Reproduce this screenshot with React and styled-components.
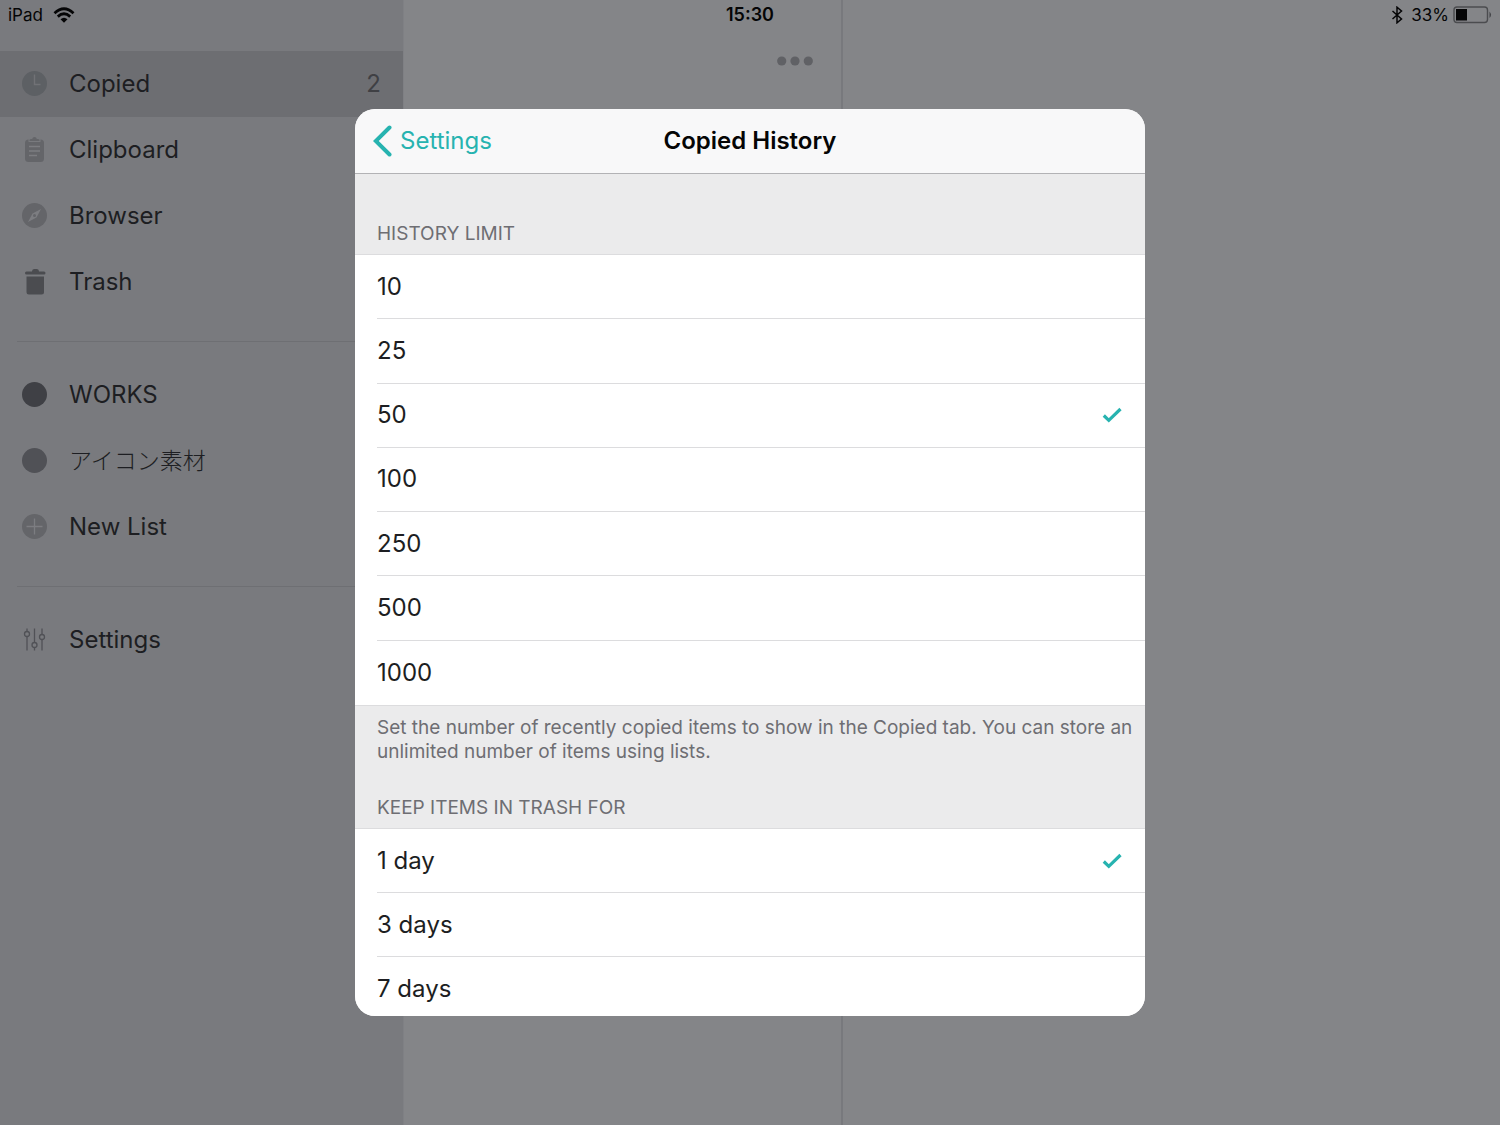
import React, { useState } from 'react'
import styled, { createGlobalStyle } from 'styled-components'

const GlobalStyle = createGlobalStyle`
  * {
    box-sizing: border-box;
  }
  body {
    margin: 0;
    background: #848588;
    color: #1d1e22;
    font-family: Inter, "Noto Sans CJK JP", sans-serif;
    font-size: 24px;
    line-height: 32px;
  }
`

const Screen = styled.div`
  display: flex;
  height: 100vh;
  overflow: hidden;
`

const StatusBar = styled.header`
  position: absolute;
  top: 0;
  left: 0;
  right: 0;
  display: grid;
  grid-template-columns: 1fr auto 1fr;
  align-items: center;
  height: 30px;
  padding: 0 8px;
  color: #050506;
  font-size: 17px;
  line-height: 20px;
`

const StatusGroup = styled.div`
  display: flex;
  align-items: center;
  justify-content: ${(props) => (props.$end ? 'flex-end' : 'flex-start')};
  gap: ${(props) => (props.$end ? '4px' : '10px')};
`

const Bluetooth = styled.svg`
  margin-right: 4px;
`

const Clock = styled.time`
  font-size: 18px;
  font-weight: 600;
`

const Sidebar = styled.nav`
  flex: 0 0 404px;
  padding-top: 51px;
  background: #797a7e;
  border-right: 1px solid #7f8084;
`

const NavGroup = styled.ul`
  list-style: none;
  margin: 0;
  padding: 0;
`

const Divider = styled.hr`
  height: 1px;
  margin: 26px 0 20px 17px;
  border: 0;
  background: #6e6f73;
`

const NavLink = styled.a`
  display: flex;
  align-items: center;
  gap: 21px;
  height: 66px;
  padding: 0 22px;
  color: inherit;
  text-decoration: none;
  background: ${(props) => (props.$active ? '#6d6e72' : 'transparent')};

  svg {
    flex: none;
  }

  :lang(ja) {
    font-size: 23px;
    font-weight: 300;
  }
`

const Count = styled.span`
  margin-left: auto;
  color: #3f4044;
`

const ClipList = styled.main`
  flex: 0 0 439px;
  padding: 50px 28px 0;
  border-right: 2px solid #78797d;
`

const MoreButton = styled.button`
  display: block;
  margin-left: auto;
  padding: 0;
  border: 0;
  background: none;
  line-height: 0;
`

const Backdrop = styled.div`
  position: absolute;
  inset: 0;
  display: grid;
  place-items: center;
`

const Dialog = styled.section`
  display: flex;
  flex-direction: column;
  width: min(790px, 100%);
  height: min(907px, 100%);
  border-radius: 20px;
  overflow: hidden;
  background: #ebebec;
`

const DialogHeader = styled.div`
  flex: none;
  display: grid;
  grid-template-columns: 1fr auto 1fr;
  align-items: center;
  height: 65px;
  padding: 0 18px;
  background: #f8f8f9;
  border-bottom: 1px solid #b2b2b5;
`

const BackButton = styled.button`
  display: flex;
  align-items: center;
  gap: 8px;
  padding: 0;
  border: 0;
  background: none;
  color: #27b3b0;
  font: inherit;
`

const Title = styled.h1`
  margin: 0;
  color: #050505;
  font-size: 24px;
  font-weight: 600;
`

const DialogBody = styled.div`
  flex: 1;
  overflow-y: auto;
  scrollbar-width: none;
`

const Section = styled.fieldset`
  min-width: 0;
  margin: 0;
  padding: 0;
  border: 0;
`

const SectionTitle = styled.legend`
  width: 100%;
  padding: ${(props) => props.$top}px 22px 8px;
  color: #6e6e73;
  font-size: 19px;
  line-height: 24px;
`

const Options = styled.div`
  display: grid;
  grid-auto-rows: 1fr;
  height: ${(props) => props.$height}px;
  padding-left: 22px;
  background: #fff;
  border-top: 1px solid #dcdcde;
  border-bottom: 1px solid #dcdcde;
`

const Option = styled.label`
  display: flex;
  align-items: center;
  justify-content: space-between;
  padding-right: 23px;

  &:not(:last-child) {
    border-bottom: 1px solid #dcdcde;
  }
`

const Radio = styled.input`
  appearance: none;
  width: 0;
  height: 0;
  margin: 0;
`

const OptionText = styled.span`
  flex: 1;
`

const Note = styled.p`
  margin: 0;
  padding: 10px 8px 0 22px;
  color: #6e6e73;
  font-size: 19px;
  line-height: 24px;
`

const iconTypes = {
  clock: (
    <>
      <circle cx="13" cy="13" r="12.5" fill="#5d6064" />
      <path d="M13 4v10h6" fill="none" stroke="#717276" strokeWidth="1.4" />
    </>
  ),
  clipboard: (
    <>
      <rect x="3.5" y="3" width="19" height="22.5" rx="3.5" fill="#646569" />
      <path d="M7 2v3.500h12V2Z" fill="#797a7e" />
      <path
        d="M8 4.500q-.5-2 1.500-2h1.200q.3-2 2.300-2t2.300 2h1.200q2 0 1.500 2Z"
        fill="#646569"
      />
      <path d="M7.500 10h11M7.500 14.500h11M7.500 19h8" stroke="#7c7d81" strokeWidth="1.4" />
    </>
  ),
  compass: (
    <>
      <circle cx="13" cy="13" r="12.5" fill="#646569" />
      <path
        fillRule="evenodd"
        d="M19.500 6.500 15 15 6.500 19.500 11 11ZM13 11.500a1.500 1.500 0 1 0 0 3 1.500 1.500 0 1 0 0-3Z"
        fill="#7c7d81"
      />
    </>
  ),
  trash: (
    <g fill="#4b4c50">
      <path d="M5 6Q3.500 6 3.500 4.500T5 3h5.500Q10.500.5 12.500.5h3q2 0 2 2.500H22.500q1.500 0 1.500 1.500T22.500 6Z" />
      <path d="M5 8h17.500v15.500q0 2.500-2.500 2.500H7.500Q5 26 5 23.500Z" />
    </g>
  ),
  dotDark: <circle cx="13" cy="13" r="12.5" fill="#3f4045" />,
  dot: <circle cx="13" cy="13" r="12.5" fill="#505156" />,
  plus: (
    <>
      <circle cx="13" cy="13" r="12.5" fill="#646569" />
      <path d="M13 5v16M5 13h16" stroke="#7c7d81" strokeWidth="1.3" />
    </>
  ),
  sliders: (
    <g fill="none" stroke="#505156" strokeWidth="1.3">
      <path d="M5.500 2v3M5.500 10v14M13 2v14M13 21v3M20.500 2v6M20.500 13v11" />
      <circle cx="5.5" cy="7.5" r="2.5" />
      <circle cx="13" cy="18.5" r="2.5" />
      <circle cx="20.5" cy="10.5" r="2.5" />
    </g>
  ),
}

const navGroups = [
  [
    { icon: 'clock', label: 'Copied', count: 2 },
    { icon: 'clipboard', label: 'Clipboard' },
    { icon: 'compass', label: 'Browser' },
    { icon: 'trash', label: 'Trash' },
  ],
  [
    { icon: 'dotDark', label: 'WORKS' },
    { icon: 'dot', label: 'アイコン素材', lang: 'ja' },
    { icon: 'plus', label: 'New List' },
  ],
  [{ icon: 'sliders', label: 'Settings' }],
]

const limits = ['10', '25', '50', '100', '250', '500', '1000']
const trashDays = ['1 day', '3 days', '7 days']

function NavIcon({ type }) {
  return (
    <svg width="26" height="26" viewBox="0.5 0.5 26 26" overflow="visible" aria-hidden="true">
      {iconTypes[type]}
    </svg>
  )
}

function OptionList({ name, items, value, onChange, height }) {
  return (
    <Options $height={height}>
      {items.map((item) => (
        <Option key={item}>
          <Radio
            type="radio"
            name={name}
            checked={item === value}
            onChange={() => onChange(item)}
          />
          <OptionText>{item}</OptionText>
          {item === value && (
            <svg width="20" height="16" viewBox="0 0 20 16" aria-hidden="true">
              <path d="M1.800 8.500 6.800 13.300 18.500 2" fill="none" stroke="#27b3b0" strokeWidth="3.200" />
            </svg>
          )}
        </Option>
      ))}
    </Options>
  )
}

export default function App() {
  const [limit, setLimit] = useState('50')
  const [days, setDays] = useState('1 day')

  return (
    <>
      <GlobalStyle />
      <Screen>
        <Sidebar>
          {navGroups.map((group, i) => (
            <React.Fragment key={i}>
              {i > 0 && <Divider />}
              <NavGroup>
                {group.map((item) => (
                  <li key={item.label}>
                    <NavLink href="#" $active={item.label === 'Copied'}>
                      <NavIcon type={item.icon} />
                      <span lang={item.lang}>{item.label}</span>
                      {item.count && <Count>{item.count}</Count>}
                    </NavLink>
                  </li>
                ))}
              </NavGroup>
            </React.Fragment>
          ))}
        </Sidebar>
        <ClipList>
          <MoreButton aria-label="More">
            <svg width="36" height="22" viewBox="0 0 36 22" fill="#606165">
              <circle cx="4.7" cy="11" r="4.600" />
              <circle cx="18" cy="11" r="4.600" />
              <circle cx="31.300" cy="11" r="4.600" />
            </svg>
          </MoreButton>
        </ClipList>
      </Screen>

      <StatusBar>
        <StatusGroup>
          <span>iPad</span>
          <svg width="22" height="16" viewBox="0 0 22 16" fill="none" stroke="#050506" aria-hidden="true">
            <path d="M1.500 6.200Q11-2.600 20.500 6.200" strokeWidth="2.800" />
            <path d="M4.800 9.600Q11 4 17.200 9.600" strokeWidth="2.800" />
            <path d="M7.500 12.300Q11 9.300 14.500 12.300L11 15.700Z" fill="#050506" stroke="none" />
          </svg>
        </StatusGroup>
        <Clock>15:30</Clock>
        <StatusGroup $end>
          <Bluetooth width="12" height="18" viewBox="0 0 12 18" aria-hidden="true">
            <path d="M1.500 5 10.500 13 6 16.800V1.200L10.500 5 1.500 13" fill="none" stroke="#050506" strokeWidth="1.5" />
          </Bluetooth>
          <span>33%</span>
          <svg width="39" height="18" viewBox="0 0 39 18" aria-hidden="true">
            <rect x="1" y="1" width="33.500" height="15.500" rx="3" fill="none" stroke="#4b4c4f" strokeWidth="1.4" />
            <rect x="3" y="3" width="11" height="11.500" fill="#050506" />
            <path d="M36.500 5.500q3 3.300 0 6.600Z" fill="#3f4044" />
          </svg>
        </StatusGroup>
      </StatusBar>

      <Backdrop>
        <Dialog role="dialog" aria-labelledby="dialog-title">
          <DialogHeader>
            <BackButton>
              <svg width="19" height="32" viewBox="0 0 19 32" aria-hidden="true">
                <path d="M16.500 2.500 2.800 16 16.500 29.500" fill="none" stroke="#27b3b0" strokeWidth="4" strokeLinecap="round" />
              </svg>
              Settings
            </BackButton>
            <Title id="dialog-title">Copied History</Title>
          </DialogHeader>
          <DialogBody>
            <Section>
              <SectionTitle $top={48}>HISTORY LIMIT</SectionTitle>
              <OptionList name="limit" items={limits} value={limit} onChange={setLimit} height={452} />
              <Note>
                Set the number of recently copied items to show in the Copied tab. You can store an
                unlimited number of items using lists.
              </Note>
            </Section>
            <Section>
              <SectionTitle $top={32}>KEEP ITEMS IN TRASH FOR</SectionTitle>
              <OptionList name="trash" items={trashDays} value={days} onChange={setDays} height={194} />
            </Section>
          </DialogBody>
        </Dialog>
      </Backdrop>
    </>
  )
}
